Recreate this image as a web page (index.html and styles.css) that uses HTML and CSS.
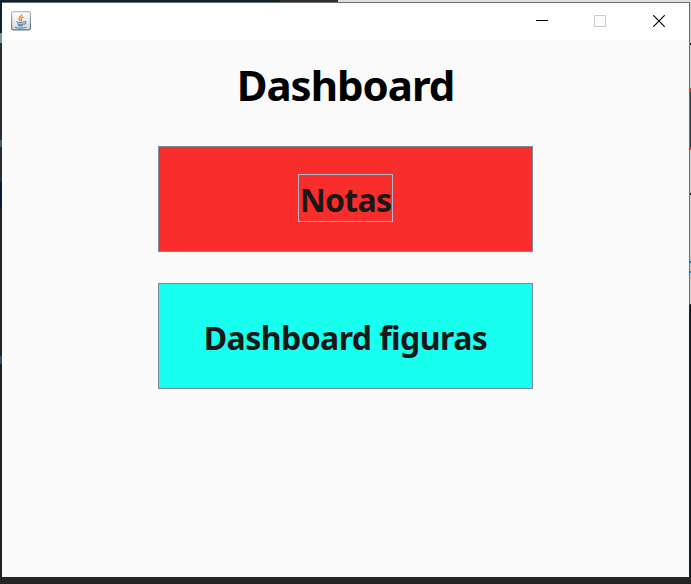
FILE: index.html
```html
<!DOCTYPE html>
<html lang="es">
<head>
<meta charset="utf-8">
<title>Dashboard</title>
<link rel="stylesheet" href="styles.css">
</head>
<body>
<div class="window">
  <header class="titlebar">
    <svg class="app-icon" width="20" height="20" viewBox="0 0 20 20">
      <defs>
        <linearGradient id="tile" x1="0" y1="0" x2="0" y2="1"><stop offset="0" stop-color="#fff"/><stop offset="1" stop-color="#d5dade"/></linearGradient>
        <linearGradient id="edge" x1="0" y1="0" x2="0" y2="1"><stop offset="0" stop-color="#b4bcc2"/><stop offset="1" stop-color="#587687"/></linearGradient>
      </defs>
      <rect x=".6" y=".6" width="18.8" height="18.3" rx="1.8" fill="url(#tile)" stroke="url(#edge)" stroke-width="1.2"/>
      <path d="M10.8 3.2C11.5 5.3 7.2 6 8 8c.3.8 1.3 1.2 1.6 2M12.6 5.8c-2.5 1-3 1.7-2 2.8.5.6.2 1-.3 1.5" fill="none" stroke="#ed8b3b" stroke-width="1.4"/>
      <path d="M5.3 10.8c2 .8 6 .8 8.2 0M6.2 12.7c2 .7 4.8.7 6.6 0M7 14.4c1.6.5 3.6.5 5 0M13.3 10.6c2.4-.6 2.1 2.2-.3 2.7M4.3 15.7c-1 1.8 9.500 1.900 11.200.2" fill="none" stroke="#5c87a8" stroke-width="1.2"/>
    </svg>
    <div class="controls">
      <svg width="12" height="12" viewBox="0 0 12 12"><path d="M0 5.5h12" stroke="#000"/></svg>
      <svg width="12" height="12" viewBox="0 0 12 12"><path d="M.5.5h11v11H.5z" fill="none" stroke="#ccc"/></svg>
      <svg class="close" width="12" height="12" viewBox="0 0 12 12"><path d="M.3.3l11.4 11.4M11.7.3L.3 11.7" stroke="#000" stroke-width="1.2"/></svg>
    </div>
  </header>
  <main class="content">
    <h1 class="title">Dashboard</h1>
    <button class="action notes"><span class="focus">Notas</span></button>
    <button class="action figures"><span class="label">Dashboard figuras</span></button>
  </main>
</div>
</body>
</html>
```
FILE: styles.css
```css
* { box-sizing: border-box; }

body {
  margin: 0;
  width: 691px;
  height: 584px;
  padding: 2px 1px 7px 2px;
  overflow: hidden;
  font-family: "Noto Sans", "Open Sans", sans-serif;
  background:
    linear-gradient(#242424, #242424) 0 577px / 691px 7px no-repeat,
    linear-gradient(#0c2432, #0c2432) 0 0 / 280px 3px no-repeat,
    linear-gradient(#302d2d, #302d2d) 280px 0 / 58px 3px no-repeat,
    linear-gradient(#dedede, #dedede) 338px 0 / 353px 3px no-repeat,
    linear-gradient(#0c2432 0 33px, #70999b 33px 43px, #292d30 43px 140px, #3c617c 140px 147px, #292d30 147px 182px, #041e38 182px 208px, #222527 208px 356px, #304c69 356px 364px, #202020 364px) 0 0 / 2px 577px no-repeat,
    linear-gradient(#c8c8c8 0 43px, #181818 43px 45px, #c8c8c8 45px 88px, #c23840 88px 92px, #34393c 92px 147px, #b5333b 147px 150px, #c8c8c8 150px 193px, #181818 193px 195px, #c8c8c8 195px 261px, #276187 261px 263px, #c8c8c8 263px 271px, #276187 271px 273px, #c8c8c8 273px 304px, #181a1b 304px) 689px 0 / 2px 577px no-repeat;
}

.window {
  height: 575px;
  border-top: 1px solid #6d6d6d;
  border-right: 1px solid;
  border-image: linear-gradient(#6d6d6d 0 302px, #202122 302px) 1;
  background: #fafafa;
}

.titlebar {
  height: 37px;
  display: flex;
  align-items: flex-start;
  justify-content: space-between;
  padding: 8px 24px 0 9px;
  background: #fff;
}

.app-icon { display: block; }

.controls {
  display: flex;
  gap: 46px;
  padding-top: 4px;
}

.close { margin-left: 1px; }

.content {
  display: flex;
  flex-direction: column;
  align-items: center;
}

.title {
  margin: 16px 0 32px;
  height: 58px;
  line-height: 58px;
  font-size: 42px;
  font-weight: 700;
  letter-spacing: -1px;
  color: #000;
}

.action {
  width: 375px;
  height: 106px;
  padding: 0;
  display: flex;
  align-items: flex-start;
  justify-content: center;
  border: 1px solid #7a8a99;
  font: 700 32px/46px "Noto Sans", "Open Sans", sans-serif;
  color: #181818;
}

.notes { background: #fa2d2d; margin-bottom: 31px; }
.figures { background: #17ffef; }

.focus {
  width: 95px;
  height: 48px;
  margin-top: 27px;
  padding-top: 2px;
  border: 1px solid #a3b8cc;
  letter-spacing: -.7px;
  white-space: nowrap;
}

.label { margin-top: 31px; letter-spacing: -.55px; white-space: nowrap; }
```
